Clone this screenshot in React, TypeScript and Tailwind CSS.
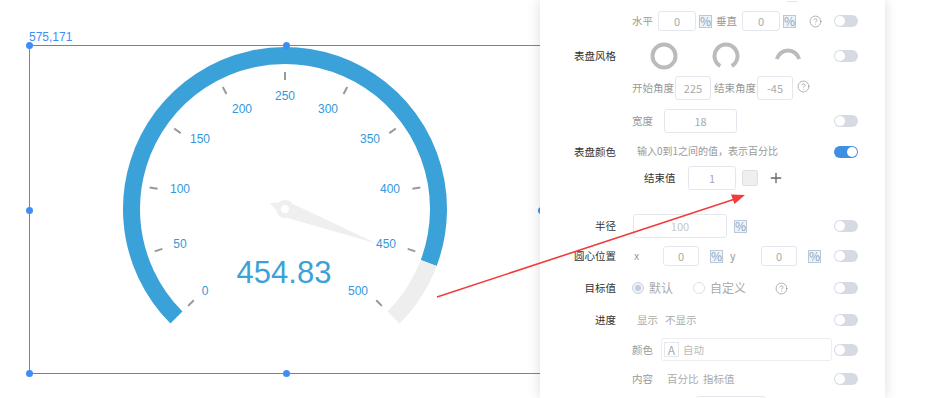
import { CircleHelp, Plus } from 'lucide-react'

const CX = 285
const CY = 209
const R = 153.5

function pt(deg: number, r: number) {
  const a = (deg * Math.PI) / 180
  return [CX + r * Math.cos(a), CY - r * Math.sin(a)]
}

function arc(from: number, to: number) {
  const [x1, y1] = pt(from, R)
  const [x2, y2] = pt(to, R)
  const large = from - to > 180 ? 1 : 0
  return `M ${x1} ${y1} A ${R} ${R} 0 ${large} 1 ${x2} ${y2}`
}

const labels: [string, number, number][] = [
  ['0', 205, 291],
  ['50', 180, 244],
  ['100', 180, 189],
  ['150', 200, 139],
  ['200', 242, 109],
  ['250', 285, 96],
  ['300', 328, 109],
  ['350', 370, 139],
  ['400', 390, 189],
  ['450', 386, 244],
  ['500', 358, 291],
]

function Gauge() {
  const value = 454.83
  const end = 225 - (value / 500) * 270
  return (
    <svg className="absolute inset-0" width={540} height={398}>
      <path d={arc(225, end)} fill="none" stroke="#3aa2d9" strokeWidth={17} />
      <path d={arc(end, -45)} fill="none" stroke="#eeeeee" strokeWidth={17} />
      {Array.from({ length: 11 }).map((_, i) => {
        const d = 225 - 27 * i
        const [x1, y1] = pt(d, 129)
        const [x2, y2] = pt(d, 137)
        return <line key={i} x1={x1} y1={y1} x2={x2} y2={y2} stroke="#999" strokeWidth={2} />
      })}
      {labels.map(([t, x, y]) => (
        <text
          key={t}
          x={x}
          y={y + 4.3}
          textAnchor="middle"
          fontSize={12}
          fill="#3498db"
          fontFamily="'Liberation Sans', Arial, sans-serif"
        >
          {t}
        </text>
      ))}
      <g transform={`rotate(${-end} ${CX} ${CY})`}>
        <path
          d={`M ${CX - 16} ${CY} L ${CX} ${CY - 8} L ${CX + 98} ${CY} L ${CX} ${CY + 8} Z`}
          fill="#efefef"
        />
        <circle cx={CX} cy={CY} r={9} fill="#efefef" />
        <circle cx={CX} cy={CY} r={4} fill="#ffffff" />
      </g>
      <text
        x={284}
        y={283}
        textAnchor="middle"
        fontSize={31}
        fill="#3aa2d9"
        fontFamily="'Liberation Sans', Arial, sans-serif"
      >
        {value}
      </text>
    </svg>
  )
}

function Handle({ className }: { className: string }) {
  return <div className={`absolute h-[7px] w-[7px] rounded-full bg-[#3d8ff5] ${className}`} />
}

function Toggle({ on = false }: { on?: boolean }) {
  return (
    <div
      className={`flex h-[12px] w-[24px] items-center rounded-full px-[1px] ${
        on ? 'justify-end bg-[#3f8fe5]' : 'justify-start bg-[#d5dae3]'
      }`}
    >
      <div className="h-[10px] w-[10px] rounded-full bg-white" />
    </div>
  )
}

function Box({ w, h = 24, text, muted, className = '' }: { w: number; h?: number; text: string; muted?: boolean; className?: string }) {
  return (
    <div
      style={{ width: w, height: h }}
      className={`flex shrink-0 items-center justify-center rounded-[3px] border border-[#e4e7ed] text-[11px] ${
        muted ? 'text-[#c8c8c8]' : 'text-[#aaa]'
      } ${className}`}
    >
      {text}
    </div>
  )
}

function Pct({ className = '' }: { className?: string }) {
  return (
    <div
      className={`flex h-[13px] w-[13px] shrink-0 items-center justify-center border border-[#b9c9dc] bg-[#eef3f8] text-[12px] leading-none text-[#8aa5c2] ${className}`}
    >
      %
    </div>
  )
}

function Help({ className = '' }: { className?: string }) {
  return <CircleHelp size={13} strokeWidth={1.4} color="#999" className={`shrink-0 ${className}`} />
}

function Row({
  h,
  label,
  toggle,
  children,
}: {
  h: number
  label?: string
  toggle?: 'on' | 'off'
  children?: React.ReactNode
}) {
  return (
    <div style={{ height: h }} className="grid shrink-0 grid-cols-[76px_218px_24px] items-center">
      <div className="text-right text-[10.5px] text-[#333]">{label}</div>
      <div className="flex items-center pl-[16px]">{children}</div>
      <div>{toggle && <Toggle on={toggle === 'on'} />}</div>
    </div>
  )
}

const sub = 'shrink-0 text-[10.5px] text-[#999]'

function Ring({ kind }: { kind: 'full' | 'gap' | 'half' }) {
  const r = 11.5
  const c = 14
  const p = (deg: number) => {
    const a = (deg * Math.PI) / 180
    return `${c + r * Math.cos(a)} ${c - r * Math.sin(a)}`
  }
  return (
    <svg width={28} height={28} className="shrink-0">
      {kind === 'full' && <circle cx={c} cy={c} r={r} fill="none" stroke="#bbb" strokeWidth={4} />}
      {kind === 'gap' && (
        <path d={`M ${p(240)} A ${r} ${r} 0 1 1 ${p(-60)}`} fill="none" stroke="#bbb" strokeWidth={4} />
      )}
      {kind === 'half' && (
        <path d={`M ${p(195)} A ${r} ${r} 0 0 1 ${p(-15)}`} fill="none" stroke="#bbb" strokeWidth={4} />
      )}
    </svg>
  )
}

function Radio({ checked }: { checked?: boolean }) {
  return (
    <div
      className={`flex h-[12px] w-[12px] shrink-0 items-center justify-center rounded-full border ${
        checked ? 'border-[#c9d2e3] bg-[#eef1f7]' : 'border-[#dcdfe6] bg-white'
      }`}
    >
      {checked && <div className="h-[6px] w-[6px] rounded-full bg-[#c3cce0]" />}
    </div>
  )
}

function Panel() {
  return (
    <div className="relative z-10 flex h-full w-[345px] shrink-0 flex-col overflow-hidden bg-white shadow-[0_0_12px_rgba(0,0,0,0.14)] font-['Noto_Sans_CJK_SC','Noto_Sans',sans-serif]">
      <div className="h-[6px] shrink-0">
        <div className="ml-[247px] h-[2px] w-[11px] border-b border-[#e4e7ed]" />
      </div>
      <Row h={30} toggle="off">
        <span className={`${sub} w-[21px]`}>水平</span>
        <Box w={38} h={20} text="0" className="ml-[5px]" />
        <Pct className="ml-[3px]" />
        <span className={`${sub} ml-[4px] w-[21px]`}>垂直</span>
        <Box w={38} h={20} text="0" className="ml-[5px]" />
        <Pct className="ml-[3px]" />
        <Help className="ml-[13px]" />
      </Row>
      <Row h={40} label="表盘风格" toggle="off">
        <div className="ml-[18px]" />
        <Ring kind="full" />
        <div className="ml-[34px]" />
        <Ring kind="gap" />
        <div className="ml-[34px]" />
        <Ring kind="half" />
      </Row>
      <Row h={24}>
        <span className={`${sub} w-[42px]`}>开始角度</span>
        <Box w={36} text="225" className="ml-[1px]" />
        <span className={`${sub} ml-[3px] w-[42px]`}>结束角度</span>
        <Box w={36} text="-45" className="ml-[1px]" />
        <Help className="ml-[4px] -mt-[4px]" />
      </Row>
      <Row h={42} toggle="off">
        <span className={`${sub} w-[21px]`}>宽度</span>
        <Box w={73} text="18" className="ml-[11px]" />
      </Row>
      <Row h={20} label="表盘颜色" toggle="on">
        <span className="-mt-[3px] ml-[5px] shrink-0 whitespace-nowrap text-[10px] text-[#999]">
          输入0到1之间的值，表示百分比
        </span>
      </Row>
      <Row h={32}>
        <span className="ml-[12px] w-[32px] shrink-0 text-[10.5px] text-[#333]">结束值</span>
        <Box w={48} text="1" className="ml-[12px] text-[#555]" />
        <div className="ml-[6px] h-[16px] w-[16px] shrink-0 rounded-[2px] border border-[#e0e0e0] bg-[#efefef]" />
        <Plus size={16} strokeWidth={2} color="#666" className="ml-[10px] shrink-0" />
      </Row>
      <div className="h-[17px] shrink-0" />
      <Row h={30} label="半径" toggle="off">
        <Box w={94} text="100" muted className="ml-[1px]" />
        <Pct className="ml-[7px]" />
      </Row>
      <Row h={30} label="圆心位置" toggle="off">
        <span className={`${sub} ml-[2px] w-[6px]`}>x</span>
        <Box w={36} h={20} text="0" className="ml-[23px]" />
        <Pct className="ml-[11px]" />
        <span className={`${sub} ml-[7px] w-[6px]`}>y</span>
        <Box w={36} h={20} text="0" className="ml-[25px]" />
        <Pct className="ml-[11px]" />
      </Row>
      <Row h={34} label="目标值" toggle="off">
        <Radio checked />
        <span className="ml-[5px] w-[24px] shrink-0 text-[12px] text-[#aaa]">默认</span>
        <div className="ml-[20px]" />
        <Radio />
        <span className="ml-[5px] w-[36px] shrink-0 text-[12px] text-[#aaa]">自定义</span>
        <Help className="ml-[29px]" />
      </Row>
      <Row h={30} label="进度" toggle="off">
        <span className={`${sub} ml-[5px] w-[21px] text-[#aaa]`}>显示</span>
        <span className={`${sub} ml-[7px] w-[32px] text-[#aaa]`}>不显示</span>
      </Row>
      <Row h={29} toggle="off">
        <span className={`${sub} w-[21px]`}>颜色</span>
        <div className="ml-[8px] flex h-[23px] w-[171px] shrink-0 items-center rounded-[3px] border border-[#eceef2] px-[2px]">
          <div className="flex h-[15px] w-[15px] items-center justify-center border border-[#e4e7ed] text-[12px] leading-none text-[#aaa]">
            A
          </div>
          <span className="ml-[4px] text-[10.5px] text-[#bbb]">自动</span>
        </div>
      </Row>
      <Row h={30} toggle="off">
        <span className={`${sub} w-[21px]`}>内容</span>
        <span className={`${sub} ml-[14px] w-[32px] text-[#aaa]`}>百分比</span>
        <span className={`${sub} ml-[4px] w-[32px] text-[#aaa]`}>指标值</span>
      </Row>
      <div className="ml-[156px] mt-[2px] h-[24px] w-[70px] shrink-0 rounded-[3px] border border-[#e4e7ed]" />
    </div>
  )
}

export default function App() {
  return (
    <div className="relative flex h-[398px] w-[933px] overflow-hidden bg-white">
      <div className="relative h-full w-[540px] shrink-0">
        <div className="absolute left-[29px] top-[31px] font-['Liberation_Sans',Arial,sans-serif] text-[12px] leading-none text-[#3d8ff5]">
          575,171
        </div>
        <div className="absolute left-[29px] top-[45px] h-[329px] w-[520px] border border-[#3d8ff5]" />
        <Gauge />
        <Handle className="left-[26px] top-[42px]" />
        <Handle className="left-[283px] top-[42px]" />
        <Handle className="left-[26px] top-[207px]" />
        <Handle className="left-[26px] top-[370px]" />
        <Handle className="left-[283px] top-[370px]" />
        <Handle className="left-[538px] top-[207px]" />
      </div>
      <Panel />
      <svg className="pointer-events-none absolute inset-0 z-20" width={933} height={398}>
        <line x1={437} y1={297} x2={735} y2={199} stroke="#f23b3b" strokeWidth={1.6} />
        <polygon points="745,195 731,194.5 734.5,204" fill="#f23b3b" />
      </svg>
    </div>
  )
}
